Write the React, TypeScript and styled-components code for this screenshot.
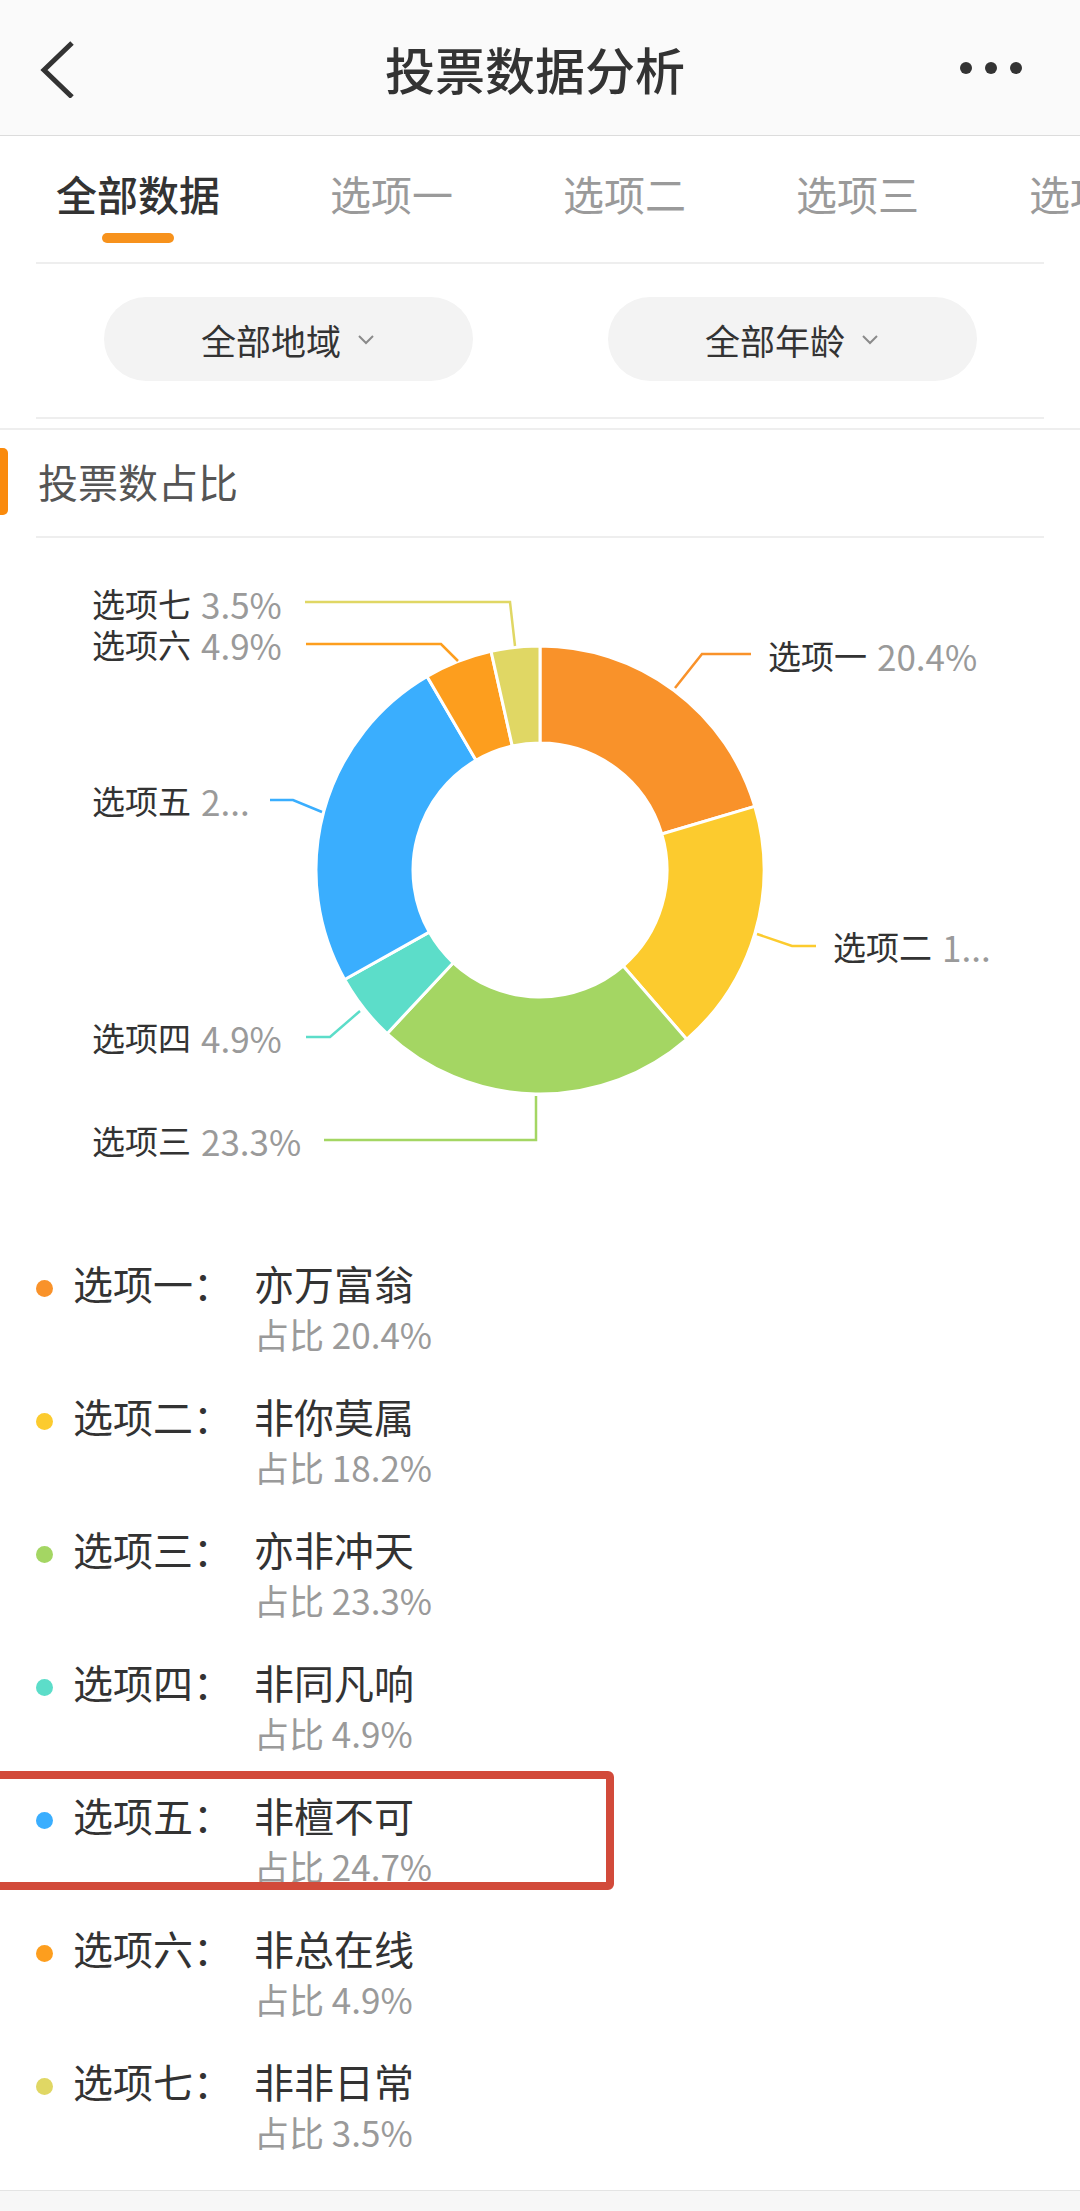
import React from 'react';
import styled, { createGlobalStyle } from 'styled-components';

const GlobalStyle = createGlobalStyle`
  html, body {
    margin: 0;
    padding: 0;
    background: #ffffff;
  }
  body {
    width: 1080px;
    overflow-x: hidden;
    font-family: "Noto Sans CJK SC", "Noto Sans", sans-serif;
    color: #333333;
  }
`;

type Option = {
  key: string;
  name: string;
  pct: number;
  color: string;
};

const options: Option[] = [
  { key: '选项一', name: '亦万富翁', pct: 20.4, color: '#F9922A' },
  { key: '选项二', name: '非你莫属', pct: 18.2, color: '#FCCB2E' },
  { key: '选项三', name: '亦非冲天', pct: 23.3, color: '#A4D663' },
  { key: '选项四', name: '非同凡响', pct: 4.9, color: '#5CDDC9' },
  { key: '选项五', name: '非檀不可', pct: 24.7, color: '#3AAEFE' },
  { key: '选项六', name: '非总在线', pct: 4.9, color: '#FD9E1E' },
  { key: '选项七', name: '非非日常', pct: 3.5, color: '#E0D764' },
];

// leader lines measured from the chart: polyline points, label anchor, shown value
const chartLabels = [
  { pts: '675,688 702,654 751,654', x: 768, y: 655, value: '20.4%' },
  { pts: '757,934 792,946 816,946', x: 833, y: 946, value: '1...' },
  { pts: '536,1096 536,1140 324,1140', x: 92, y: 1140, value: '23.3%' },
  { pts: '360,1011 330,1037 306,1037', x: 92, y: 1037, value: '4.9%' },
  { pts: '322,812 293,800 270,800', x: 92, y: 800, value: '2...' },
  { pts: '458,661 441,644 306,644', x: 92, y: 644, value: '4.9%' },
  { pts: '515,646 510,602 305,602', x: 92, y: 603, value: '3.5%' },
];

const tabs = ['全部数据', '选项一', '选项二', '选项三', '选项四', '选项五'];

const Page = styled.div`
  width: 1080px;
  background: #ffffff;
`;

const Header = styled.header`
  height: 136px;
  box-sizing: border-box;
  background: #fafafa;
  border-bottom: 1px solid #dcdcdc;
  display: flex;
  align-items: center;
  justify-content: space-between;
  padding: 0 50px 0 40px;
`;

const Title = styled.h1`
  margin: 0;
  font-size: 50px;
  font-weight: 500;
  line-height: 60px;
  color: #333333;
`;

const IconBox = styled.div`
  width: 70px;
  height: 60px;
  display: flex;
  align-items: center;
`;

const TabBar = styled.div`
  display: flex;
  padding: 32px 0 19px 56px;
  white-space: nowrap;
  overflow: hidden;
`;

const Tab = styled.div<{ $active?: boolean }>`
  flex: none;
  display: flex;
  flex-direction: column;
  align-items: center;
  margin-right: 110px;
  font-size: 41px;
  line-height: 50px;
  font-weight: ${(p) => (p.$active ? 500 : 400)};
  color: ${(p) => (p.$active ? '#333333' : '#9a9a9a')};
`;

const Indicator = styled.div<{ $show?: boolean }>`
  width: 72px;
  height: 10px;
  margin-top: 15px;
  border-radius: 5px;
  background: ${(p) => (p.$show ? '#F7921C' : 'transparent')};
`;

const Divider = styled.div<{ $inset?: boolean }>`
  height: 2px;
  background: #eeeeee;
  margin: 0 ${(p) => (p.$inset ? '36px' : '0')};
`;

const FilterRow = styled.div`
  display: grid;
  grid-template-columns: 1fr 1fr;
  padding: 33px 36px 36px;
`;

const Pill = styled.button`
  justify-self: center;
  width: 369px;
  height: 84px;
  border: none;
  border-radius: 42px;
  background: #f3f3f3;
  display: flex;
  align-items: center;
  justify-content: center;
  gap: 16px;
  font-family: inherit;
  font-size: 35px;
  color: #333333;
  padding: 0;
`;

const Gap = styled.div`
  height: 9px;
`;

const SectionHead = styled.div`
  height: 106px;
  box-sizing: border-box;
  padding-top: 18px;
  display: flex;
  align-items: flex-start;
`;

const AccentBar = styled.div`
  width: 8px;
  height: 67px;
  border-radius: 0 5px 5px 0;
  background: #FA8A0C;
`;

const SectionTitle = styled.h2`
  margin: 0 0 0 30px;
  font-size: 40px;
  font-weight: 400;
  line-height: 67px;
  color: #555555;
`;

const ChartBox = styled.div`
  height: 662px;
  svg {
    display: block;
  }
`;

const ChartText = styled.text`
  font-family: "Noto Sans CJK SC", "Noto Sans", sans-serif;
  font-size: 33px;
`;

const ChartValue = styled.tspan`
  font-size: 35px;
  fill: #9a9a9a;
`;

const Legend = styled.div`
  display: flex;
  flex-direction: column;
  gap: 37px;
  padding: 59px 0 37px;
`;

const Row = styled.div`
  position: relative;
  display: grid;
  grid-template-columns: 17px 161px auto;
  column-gap: 20px;
  padding-left: 36px;
`;

const Dot = styled.span<{ $color: string }>`
  width: 17px;
  height: 17px;
  margin-top: 21px;
  border-radius: 50%;
  background: ${(p) => p.$color};
`;

const RowLabel = styled.div`
  font-size: 40px;
  line-height: 48px;
  color: #333333;
  white-space: nowrap;
`;

const RowBody = styled.div`
  display: flex;
  flex-direction: column;
`;

const RowName = styled.div`
  font-size: 40px;
  line-height: 48px;
  color: #333333;
`;

const RowPct = styled.div`
  margin-top: 6px;
  font-size: 35px;
  line-height: 42px;
  color: #9a9a9a;
`;

const Highlight = styled.div`
  position: absolute;
  left: -10px;
  top: -20px;
  width: 624px;
  height: 119px;
  box-sizing: border-box;
  border: 8px solid #D24A3A;
  border-radius: 6px;
  pointer-events: none;
`;

const Footer = styled.div`
  height: 21px;
  box-sizing: border-box;
  border-top: 1px solid #e4e4e4;
  background: #f7f7f7;
`;

const arcPath = (a0: number, a1: number, r0: number, r1: number, cx: number, cy: number) => {
  const pt = (a: number, r: number) => `${cx + r * Math.sin(a)} ${cy - r * Math.cos(a)}`;
  const large = a1 - a0 > Math.PI ? 1 : 0;
  return `M${pt(a0, r1)} A${r1} ${r1} 0 ${large} 1 ${pt(a1, r1)} L${pt(a1, r0)} A${r0} ${r0} 0 ${large} 0 ${pt(a0, r0)} Z`;
};

const Donut = () => {
  const total = options.reduce((s, o) => s + o.pct, 0);
  let acc = 0;
  const slices = options.map((o) => {
    const a0 = (acc / total) * Math.PI * 2;
    acc += o.pct;
    const a1 = (acc / total) * Math.PI * 2;
    return { d: arcPath(a0, a1, 127, 224, 540, 870), color: o.color };
  });

  return (
    <svg width="1080" height="662" viewBox="0 538 1080 662">
      {slices.map((s, i) => (
        <path key={i} d={s.d} fill={s.color} stroke="#ffffff" strokeWidth="3" strokeLinejoin="round" />
      ))}
      {chartLabels.map((l, i) => (
        <g key={i}>
          <polyline points={l.pts} fill="none" stroke={options[i].color} strokeWidth="2.5" />
          <ChartText x={l.x} y={l.y} dominantBaseline="central">
            <tspan fill="#333333">{options[i].key}</tspan>
            <ChartValue dx="10">{l.value}</ChartValue>
          </ChartText>
        </g>
      ))}
    </svg>
  );
};

export default function App() {
  return (
    <Page>
      <GlobalStyle />
      <Header>
        <IconBox>
          <svg width="40" height="60" viewBox="0 0 40 60">
            <polyline points="32,5 4,32 32,59" fill="none" stroke="#333333" strokeWidth="5" />
          </svg>
        </IconBox>
        <Title>投票数据分析</Title>
        <IconBox>
          <svg width="70" height="20" viewBox="0 0 70 20">
            <circle cx="6" cy="10" r="6" fill="#333333" />
            <circle cx="31" cy="10" r="6" fill="#333333" />
            <circle cx="56" cy="10" r="6" fill="#333333" />
          </svg>
        </IconBox>
      </Header>

      <TabBar>
        {tabs.map((t, i) => (
          <Tab key={t} $active={i === 0}>
            {t}
            <Indicator $show={i === 0} />
          </Tab>
        ))}
      </TabBar>
      <Divider $inset />

      <FilterRow>
        {['全部地域', '全部年龄'].map((f) => (
          <Pill key={f}>
            {f}
            <svg width="18" height="11" viewBox="0 0 18 11">
              <polyline points="2,2 9,9 16,2" fill="none" stroke="#8a8a8a" strokeWidth="2" />
            </svg>
          </Pill>
        ))}
      </FilterRow>
      <Divider $inset />
      <Gap />
      <Divider />

      <SectionHead>
        <AccentBar />
        <SectionTitle>投票数占比</SectionTitle>
      </SectionHead>
      <Divider $inset />

      <ChartBox>
        <Donut />
      </ChartBox>

      <Legend>
        {options.map((o, i) => (
          <Row key={o.key}>
            <Dot $color={o.color} />
            <RowLabel>{o.key}：</RowLabel>
            <RowBody>
              <RowName>{o.name}</RowName>
              <RowPct>占比 {o.pct}%</RowPct>
            </RowBody>
            {i === 4 && <Highlight />}
          </Row>
        ))}
      </Legend>
      <Footer />
    </Page>
  );
}
